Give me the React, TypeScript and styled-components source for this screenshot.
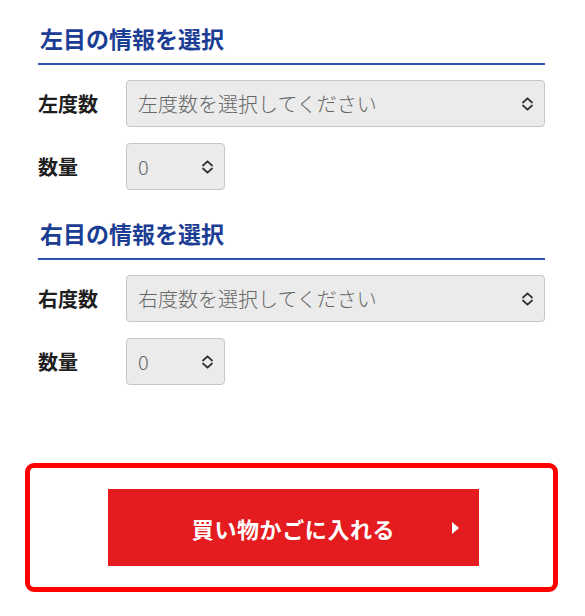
import React from 'react';
import styled, { createGlobalStyle } from 'styled-components';

const GlobalStyles = createGlobalStyle`
    body {
        margin: 0;
        background: #fff;
        font-family: 'Noto Sans CJK JP', 'Noto Sans', sans-serif;
        color: #222;
    }
`;

const Page = styled.div`
    width: 585px;
    padding: 23px 40px 26px 38px;
    box-sizing: border-box;
`;

const Section = styled.section<{ $first?: boolean }>`
    margin-top: ${(p) => (p.$first ? '0' : '28px')};
`;

const Heading = styled.h2`
    margin: 0 0 15px;
    padding: 0 0 9px 2px;
    font-size: 23px;
    line-height: 31px;
    font-weight: 700;
    color: #1c3d94;
    border-bottom: 2px solid #2f55b0;
`;

const Rows = styled.div`
    display: flex;
    flex-direction: column;
    gap: 16px;
`;

const Row = styled.div`
    display: grid;
    grid-template-columns: 88px 1fr;
    align-items: center;
`;

const Label = styled.span`
    font-size: 20px;
    font-weight: 700;
    color: #1e1e1e;
`;

const SelectWrap = styled.div<{ $width?: number }>`
    position: relative;
    width: ${(p) => (p.$width ? `${p.$width}px` : '100%')};
`;

const Select = styled.select`
    appearance: none;
    width: 100%;
    height: 47px;
    padding: 0 36px 0 11px;
    box-sizing: border-box;
    border: 1px solid #c6c6c6;
    border-radius: 4px;
    background: #ebebeb;
    font-family: inherit;
    font-size: 20px;
    font-weight: 300;
    color: #666;
    outline: none;
`;

const Chevron = styled.svg`
    position: absolute;
    right: 11px;
    top: 50%;
    transform: translateY(-50%);
    pointer-events: none;
`;

const CartFrame = styled.div`
    margin: 78px 0 0 -13px;
    width: 533px;
    box-sizing: border-box;
    border: 5px solid #ff0000;
    border-radius: 9px;
    padding: 21px 0 21px;
    display: flex;
    justify-content: center;
`;

const CartButton = styled.button`
    position: relative;
    width: 371px;
    height: 77px;
    margin-left: 4px;
    border: none;
    background: #e51c1f;
    color: #fff;
    font-family: inherit;
    font-size: 22px;
    font-weight: 700;
    letter-spacing: 0.6px;
    cursor: pointer;
`;

const Arrow = styled.span`
    position: absolute;
    right: 20px;
    top: 50%;
    transform: translateY(-50%);
    width: 0;
    height: 0;
    border-top: 6px solid transparent;
    border-bottom: 6px solid transparent;
    border-left: 7px solid #fff;
`;

function UpDown() {
    return (
        <Chevron width="13" height="15" viewBox="0 0 13 15" fill="none">
            <path d="M2 6 L6.5 1.8 L11 6" stroke="#333" strokeWidth="1.8" strokeLinecap="round" strokeLinejoin="round" />
            <path d="M2 9 L6.5 13.2 L11 9" stroke="#333" strokeWidth="1.8" strokeLinecap="round" strokeLinejoin="round" />
        </Chevron>
    );
}

type EyeProps = { side: string; first?: boolean };

function EyeSection({ side, first }: EyeProps) {
    return (
        <Section $first={first}>
            <Heading>{side}目の情報を選択</Heading>
            <Rows>
                <Row>
                    <Label>{side}度数</Label>
                    <SelectWrap>
                        <Select defaultValue="">
                            <option value="">{side}度数を選択してください</option>
                        </Select>
                        <UpDown />
                    </SelectWrap>
                </Row>
                <Row>
                    <Label>数量</Label>
                    <SelectWrap $width={99}>
                        <Select defaultValue="0">
                            <option value="0">0</option>
                            <option value="1">1</option>
                            <option value="2">2</option>
                        </Select>
                        <UpDown />
                    </SelectWrap>
                </Row>
            </Rows>
        </Section>
    );
}

export default function App() {
    return (
        <Page>
            <GlobalStyles />
            <EyeSection side="左" first />
            <EyeSection side="右" />
            <CartFrame>
                <CartButton>
                    買い物かごに入れる
                    <Arrow />
                </CartButton>
            </CartFrame>
        </Page>
    );
}
